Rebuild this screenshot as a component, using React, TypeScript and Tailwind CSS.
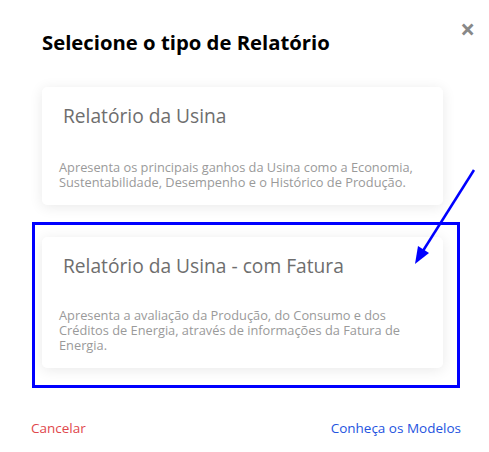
import React from "react";

const font = { fontFamily: '"Open Sans", "Noto Sans", sans-serif' };

function Card({ title, desc, h }: { title: string; desc: string; h: string }) {
  return (
    <div className={`ml-[42px] mr-[46px] ${h} rounded-[5px] bg-white shadow-[0_2px_14px_rgba(0,0,0,0.09)] flex flex-col`}>
      <div className="pl-[21px] pt-[16px] text-[19.2px] leading-[26px] text-[#6e6e6e] font-normal">{title}</div>
      <div className="pl-[17px] pr-[20px] mt-auto pb-[15px] text-[12.8px] leading-[15px] text-[#9a9a9a]">{desc}</div>
    </div>
  );
}

export default function App() {
  return (
    <div className="relative w-[489px] h-[452px] bg-white overflow-hidden" style={font}>
      <div className="absolute right-[14px] top-[16px] text-[#888] text-[26px] leading-[26px] font-bold">×</div>
      <div className="pl-[42px] pt-[29px] text-[20.3px] leading-[27px] font-bold text-black">Selecione o tipo de Relatório</div>
      <div className="mt-[31px] flex flex-col gap-[32px]">
        <Card
          h="h-[118px]"
          title="Relatório da Usina"
          desc="Apresenta os principais ganhos da Usina como a Economia, Sustentabilidade, Desempenho e o Histórico de Produção."
        />
        <Card
          h="h-[131px]"
          title="Relatório da Usina - com Fatura"
          desc="Apresenta a avaliação da Produção, do Consumo e dos Créditos de Energia, através de informações da Fatura de Energia."
        />
      </div>
      <div className="flex justify-between pl-[31px] pr-[28px] mt-[50px] text-[13.5px] leading-[20px]">
        <span className="text-[#e0474c]">Cancelar</span>
        <span className="text-[#2453e0]">Conheça os Modelos</span>
      </div>
      <div className="absolute left-[32px] top-[222px] w-[428px] h-[166px] border-[3px] border-[#0000ff]" />
      <svg className="absolute left-0 top-0" width="489" height="452">
        <line x1="474" y1="170" x2="421" y2="254" stroke="#0000ff" strokeWidth="2.5" />
        <polygon points="415,264 418,246 429,253" fill="#0000ff" />
      </svg>
    </div>
  );
}
